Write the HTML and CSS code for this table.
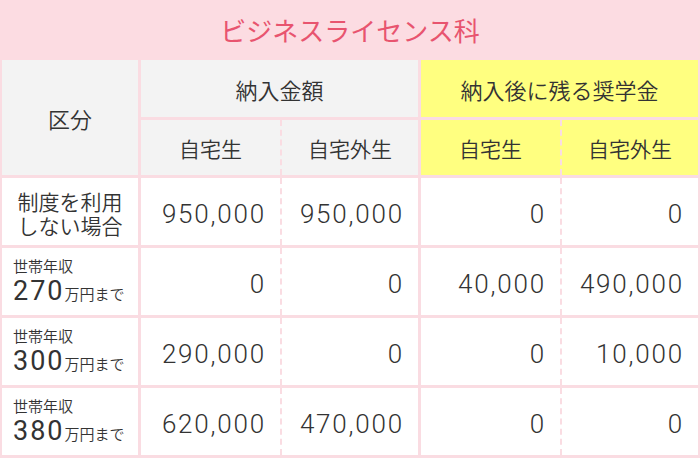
FILE: index.html
```html
<!DOCTYPE html>
<html lang="ja">
<head>
<meta charset="utf-8">
<title>ビジネスライセンス科</title>
<link rel="stylesheet" href="styles.css">
</head>
<body>
<div class="wrap">
  <div class="title">ビジネスライセンス科</div>
  <div class="grid">
    <div class="cell head c1 span-rows">区分</div>
    <div class="cell head c2 span-cols sep">納入金額</div>
    <div class="cell yel c4 span-cols sep">納入後に残る奨学金</div>

    <div class="cell head sub c2 sep">自宅生</div>
    <div class="cell head sub c3 dash">自宅外生</div>
    <div class="cell yel sub c4 sep">自宅生</div>
    <div class="cell yel sub c5 dash">自宅外生</div>

    <div class="cell label"><span>制度を利用</span><span>しない場合</span></div>
    <div class="cell num sep">950,000</div>
    <div class="cell num dash">950,000</div>
    <div class="cell num sep">0</div>
    <div class="cell num dash">0</div>

    <div class="cell income"><span class="small">世帯年収</span><span class="line"><span class="big">270</span><span class="unit">万円まで</span></span></div>
    <div class="cell num sep">0</div>
    <div class="cell num dash">0</div>
    <div class="cell num sep">40,000</div>
    <div class="cell num dash">490,000</div>

    <div class="cell income"><span class="small">世帯年収</span><span class="line"><span class="big">300</span><span class="unit">万円まで</span></span></div>
    <div class="cell num sep">290,000</div>
    <div class="cell num dash">0</div>
    <div class="cell num sep">0</div>
    <div class="cell num dash">10,000</div>

    <div class="cell income"><span class="small">世帯年収</span><span class="line"><span class="big">380</span><span class="unit">万円まで</span></span></div>
    <div class="cell num sep">620,000</div>
    <div class="cell num dash">470,000</div>
    <div class="cell num sep">0</div>
    <div class="cell num dash">0</div>
  </div>
</div>
</body>
</html>
```
FILE: styles.css
```css
* { box-sizing: border-box; }
html, body { margin: 0; padding: 0; background: #ffffff; }
body {
  font-family: "Noto Sans CJK JP", "Noto Sans", sans-serif;
  font-weight: 350;
  color: #333333;
}
.wrap { width: 700px; background: #fcdce2; }
.title {
  height: 60px;
  display: flex;
  align-items: center;
  justify-content: center;
  padding-top: 1px;
  padding-bottom: 2px;
  color: #e8546f;
  font-size: 26px;
  font-weight: 400;
}
.grid {
  display: grid;
  grid-template-columns: 136px 142px 138px 142px 138px;
  grid-template-rows: 57px 55px 67px 67px 67px 67px;
  row-gap: 3px;
  padding: 0 2px 3px 2px;
  background: #fadce2;
}
.cell {
  display: flex;
  align-items: center;
  justify-content: center;
  background: #ffffff;
}
.head { background: #f3f3f3; font-size: 22px; }
.yel { background: #ffff80; font-size: 22px; }
.sub { font-size: 21px; }
.c1 { grid-column: 1; }
.c2 { grid-column: 2; }
.c3 { grid-column: 3; }
.c4 { grid-column: 4; }
.c5 { grid-column: 5; }
.span-rows { grid-row: 1 / span 2; }
.span-cols { grid-column-end: span 2; }
.sep { border-left: 3px solid #fadce2; }
.dash { border-left: 2px dashed #fadce2; }
.label {
  flex-direction: column;
  font-size: 21px;
  line-height: 24px;
  text-align: center;
  padding-top: 2px;
}
.num {
  justify-content: flex-end;
  padding-right: 14px;
  padding-top: 4px;
  font-family: "Roboto", sans-serif;
  font-size: 26px;
  letter-spacing: 1.8px;
  font-weight: 300;
}
.income {
  flex-direction: column;
  align-items: flex-start;
  justify-content: center;
  padding-left: 11px;
  padding-top: 2px;
}
.small { font-size: 15px; line-height: 20px; }
.line { display: flex; align-items: baseline; line-height: 30px; }
.big {
  font-family: "Roboto", sans-serif;
  font-size: 27px;
  font-weight: 400;
  letter-spacing: 2px;
}
.unit { font-size: 15px; margin-left: 0; }
```
